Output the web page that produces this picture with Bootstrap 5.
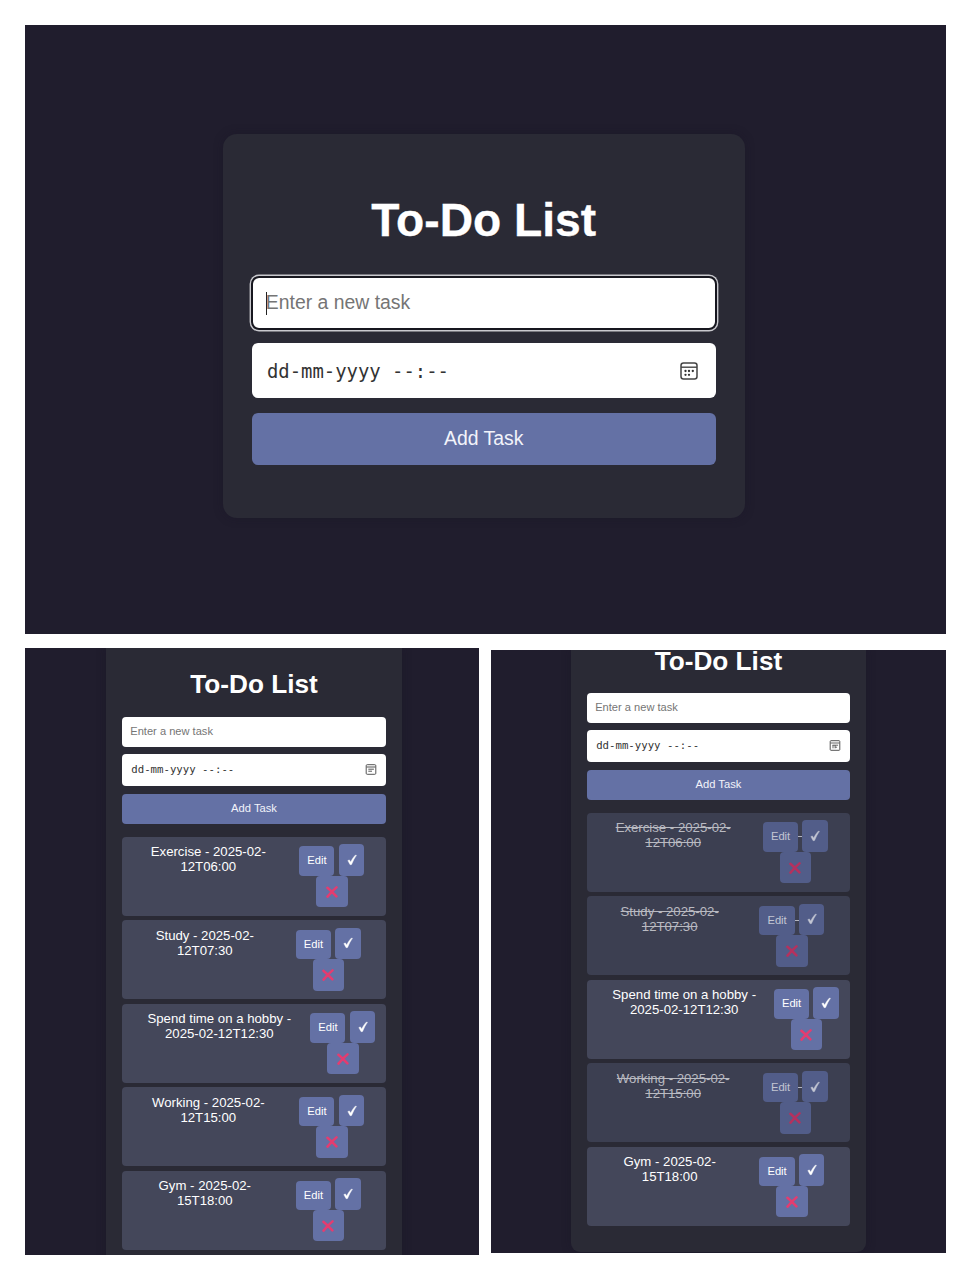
<!DOCTYPE html>
<html lang="en">
<head>
<meta charset="utf-8">
<meta name="viewport" content="width=device-width, initial-scale=1">
<title>To-Do List</title>
<link href="https://cdn.jsdelivr.net/npm/bootstrap@5.3.0/dist/css/bootstrap.min.css" rel="stylesheet">
<style>
body{margin:0;background:#fff;font-family:"Liberation Sans",Arial,sans-serif;width:970px;height:1280px;overflow:hidden}
.board{padding:25px 24.5px 0 25px}
.stage{background:#201d2d;overflow:hidden}
.stage-main{height:609px;padding-top:109px;padding-right:3px}
.stage-left{width:454px;height:607px;margin-top:13.5px}
.stage-right{width:454.5px;height:603.5px;margin-top:15.5px}
.panel{background:#2a2a35;color:#fff;box-shadow:0 0 10px rgba(24,20,36,.35)}
.panel-main{width:521.5px;height:383.5px;border-radius:14px;padding:0 28.5px}
.panel-side{width:296px;padding:0 16.3px;border-radius:0 0 9px 9px}
.stage-left .panel-side{height:700px;margin-left:81px}
.stage-right .panel-side{width:294.5px;height:602px;margin-left:80.2px;padding:0 16px}
.title{font-weight:700;text-align:center;margin:0;white-space:nowrap}
.panel-main .title{font-size:46.2px;line-height:54px;padding-top:59px;margin-bottom:31px;-webkit-text-stroke:.3px #fff}
.panel-side .title{font-size:26.2px;line-height:30px}
.stage-left .title{padding-top:21px;margin-bottom:18px}
.stage-right .title{line-height:22px;margin-bottom:21px}
.field{background:#fff;color:#757575;white-space:nowrap}
.panel-main .field{height:54.5px;border-radius:6px;padding:0 15px;font-size:19.4px}
.panel-main .first{height:50px;margin:0 1px;padding:0 13px 0;outline:2px solid #17171f;box-shadow:0 0 0 3.4px #c9c9ce}
.caret{width:1.3px;height:23px;background:#222;margin-right:-1px}
.panel-main .date{margin-top:15px}
.date{font-family:"DejaVu Sans Mono",monospace;color:#333}
.panel-main .date{font-size:18.9px;padding:2px 14px 0 15.5px}
.add{background:#6471a5;color:#f2f3fa;border:0;width:100%;padding:0}
.add:hover{background:#6471a5}
.panel-main .add{margin-top:15.5px;height:52px;border-radius:6px;font-size:19.4px;padding-bottom:1px}
.panel-side .field{height:30px;border-radius:4px;padding:0 8px 1px;font-size:11.1px}
.panel-side .date{height:31.5px;margin-top:7.5px;font-size:10.7px;padding:0 9px}
.panel-side .add{display:block;height:29.5px;margin-top:8.5px;margin-bottom:13px;border-radius:4px;font-size:11.2px;line-height:27px}
.task{height:79.2px;margin-bottom:4.35px;border-radius:4px;background:#44475a}
.at-a{padding-left:11px}.at-b{padding-left:7.5px}.at-c{padding-left:22px}
.label-text{width:150px;padding-top:7.5px;text-align:center;font-size:13.2px;line-height:15.1px;white-space:nowrap}
.acts{margin:7.6px 0 0 16px;width:65px}
.stage-right .acts{margin-left:14.8px}
.act{background:#6471a5;border-radius:4px;color:#fff;font-size:11.2px;line-height:29px;text-align:center}
.act-edit{width:35.2px;height:29.4px}
.act-ok{width:25.5px;height:31.7px}
.act-del{width:31.5px;height:31.5px}
.task.done{background:#3c3f51;color:#b9bac1}
.done .act{background:#525d89;color:#c3c6d3}
.done .label-text{text-decoration:line-through}
.dash{width:4px;height:1.3px;margin-bottom:14.5px}
.done .dash{background:#b3b5c0}
.act-del svg{color:#e43c70}.done .act-del svg{color:#b5315e}
</style>
</head>
<body>
<svg class="d-none" xmlns="http://www.w3.org/2000/svg">
<symbol id="ok" viewBox="0 0 10 12"><path d="M.8 6.6 2.4 5.9 3.7 8C5 5.2 6.6 2.9 8.2 1.2L9.5 1.3C7.6 4 6 7 4.6 10.5L3.1 10.7Z" fill="currentColor" stroke="currentColor" stroke-width=".4"/></symbol>
<symbol id="del" viewBox="0 0 12 12"><path d="M1.4 1.7Q5.2 4.8 10.4 10.4M10.5 1.4Q6 5.2 1.5 10.6" fill="none" stroke="currentColor" stroke-width="2.5" stroke-linecap="round"/></symbol>
<symbol id="cal" viewBox="0 0 18 18"><rect x="1" y="1" width="16" height="16" rx="2.5" fill="none" stroke="#444" stroke-width="1.5"/><path d="M1 5.2H17" stroke="#444" stroke-width="1.4"/><g fill="#333"><circle cx="5.5" cy="9" r="1.15"/><circle cx="9" cy="9" r="1.15"/><circle cx="12.8" cy="9" r="1.15"/><circle cx="5.5" cy="12.8" r="1.15"/><circle cx="9" cy="12.8" r="1.15"/></g></symbol>
<symbol id="cal-lines" viewBox="0 0 11 11"><rect x=".7" y=".7" width="9.6" height="9.6" rx="1" fill="none" stroke="#555" stroke-width="1"/><path d="M1 3H10M2.8 5.2H8.4M2.8 7.2H6.5" stroke="#555" stroke-width="1"/></symbol>
<symbol id="cal-small" viewBox="0 0 11 11"><rect x=".7" y=".7" width="9.6" height="9.6" rx=".8" fill="none" stroke="#555" stroke-width="1"/><path d="M1 3H10M3 5.2H8.6M3.5 5V8.3M5.6 5V8.3M5.6 7.2H7.6" fill="none" stroke="#555" stroke-width=".9"/></symbol>
</svg>
<main class="board">
<section class="stage stage-main d-flex justify-content-center align-items-start">
<div class="panel panel-main">
<h1 class="title">To-Do List</h1>
<div class="field first d-flex align-items-center"><span class="caret"></span>Enter a new task</div>
<div class="field date d-flex align-items-center justify-content-between"><span>dd-mm-yyyy --:--</span><svg class="me-1" width="18" height="18"><use href="#cal"/></svg></div>
<button class="btn add">Add Task</button>
</div>
</section>
<div class="d-flex justify-content-between align-items-start">
<section class="stage stage-left">
<div class="panel panel-side">
<h2 class="title">To-Do List</h2>
<div class="field d-flex align-items-center">Enter a new task</div>
<div class="field date d-flex align-items-center justify-content-between"><span>dd-mm-yyyy --:--</span><svg width="12" height="11"><use href="#cal-lines"/></svg></div>
<button class="btn add">Add Task</button>
<div class="task d-flex at-a"><div class="label-text">Exercise - 2025-02-<br>12T06:00</div><div class="acts"><div class="d-flex align-items-end justify-content-between"><div class="act act-edit">Edit</div><div class="dash"></div><div class="act act-ok d-flex align-items-center justify-content-center"><svg width="10" height="12"><use href="#ok"/></svg></div></div><div class="act act-del mx-auto d-flex align-items-center justify-content-center"><svg width="12" height="12"><use href="#del"/></svg></div></div></div>
<div class="task d-flex at-b"><div class="label-text">Study - 2025-02-<br>12T07:30</div><div class="acts"><div class="d-flex align-items-end justify-content-between"><div class="act act-edit">Edit</div><div class="dash"></div><div class="act act-ok d-flex align-items-center justify-content-center"><svg width="10" height="12"><use href="#ok"/></svg></div></div><div class="act act-del mx-auto d-flex align-items-center justify-content-center"><svg width="12" height="12"><use href="#del"/></svg></div></div></div>
<div class="task d-flex at-c"><div class="label-text">Spend time on a hobby -<br>2025-02-12T12:30</div><div class="acts"><div class="d-flex align-items-end justify-content-between"><div class="act act-edit">Edit</div><div class="dash"></div><div class="act act-ok d-flex align-items-center justify-content-center"><svg width="10" height="12"><use href="#ok"/></svg></div></div><div class="act act-del mx-auto d-flex align-items-center justify-content-center"><svg width="12" height="12"><use href="#del"/></svg></div></div></div>
<div class="task d-flex at-a"><div class="label-text">Working - 2025-02-<br>12T15:00</div><div class="acts"><div class="d-flex align-items-end justify-content-between"><div class="act act-edit">Edit</div><div class="dash"></div><div class="act act-ok d-flex align-items-center justify-content-center"><svg width="10" height="12"><use href="#ok"/></svg></div></div><div class="act act-del mx-auto d-flex align-items-center justify-content-center"><svg width="12" height="12"><use href="#del"/></svg></div></div></div>
<div class="task d-flex at-b"><div class="label-text">Gym - 2025-02-<br>15T18:00</div><div class="acts"><div class="d-flex align-items-end justify-content-between"><div class="act act-edit">Edit</div><div class="dash"></div><div class="act act-ok d-flex align-items-center justify-content-center"><svg width="10" height="12"><use href="#ok"/></svg></div></div><div class="act act-del mx-auto d-flex align-items-center justify-content-center"><svg width="12" height="12"><use href="#del"/></svg></div></div></div>
</div>
</section>
<section class="stage stage-right">
<div class="panel panel-side">
<h2 class="title">To-Do List</h2>
<div class="field d-flex align-items-center">Enter a new task</div>
<div class="field date d-flex align-items-center justify-content-between"><span>dd-mm-yyyy --:--</span><svg width="12" height="11"><use href="#cal-small"/></svg></div>
<button class="btn add">Add Task</button>
<div class="task done d-flex at-a"><div class="label-text">Exercise - 2025-02-<br>12T06:00</div><div class="acts"><div class="d-flex align-items-end justify-content-between"><div class="act act-edit">Edit</div><div class="dash"></div><div class="act act-ok d-flex align-items-center justify-content-center"><svg width="10" height="12"><use href="#ok"/></svg></div></div><div class="act act-del mx-auto d-flex align-items-center justify-content-center"><svg width="12" height="12"><use href="#del"/></svg></div></div></div>
<div class="task done d-flex at-b"><div class="label-text">Study - 2025-02-<br>12T07:30</div><div class="acts"><div class="d-flex align-items-end justify-content-between"><div class="act act-edit">Edit</div><div class="dash"></div><div class="act act-ok d-flex align-items-center justify-content-center"><svg width="10" height="12"><use href="#ok"/></svg></div></div><div class="act act-del mx-auto d-flex align-items-center justify-content-center"><svg width="12" height="12"><use href="#del"/></svg></div></div></div>
<div class="task d-flex at-c"><div class="label-text">Spend time on a hobby -<br>2025-02-12T12:30</div><div class="acts"><div class="d-flex align-items-end justify-content-between"><div class="act act-edit">Edit</div><div class="dash"></div><div class="act act-ok d-flex align-items-center justify-content-center"><svg width="10" height="12"><use href="#ok"/></svg></div></div><div class="act act-del mx-auto d-flex align-items-center justify-content-center"><svg width="12" height="12"><use href="#del"/></svg></div></div></div>
<div class="task done d-flex at-a"><div class="label-text">Working - 2025-02-<br>12T15:00</div><div class="acts"><div class="d-flex align-items-end justify-content-between"><div class="act act-edit">Edit</div><div class="dash"></div><div class="act act-ok d-flex align-items-center justify-content-center"><svg width="10" height="12"><use href="#ok"/></svg></div></div><div class="act act-del mx-auto d-flex align-items-center justify-content-center"><svg width="12" height="12"><use href="#del"/></svg></div></div></div>
<div class="task d-flex at-b"><div class="label-text">Gym - 2025-02-<br>15T18:00</div><div class="acts"><div class="d-flex align-items-end justify-content-between"><div class="act act-edit">Edit</div><div class="dash"></div><div class="act act-ok d-flex align-items-center justify-content-center"><svg width="10" height="12"><use href="#ok"/></svg></div></div><div class="act act-del mx-auto d-flex align-items-center justify-content-center"><svg width="12" height="12"><use href="#del"/></svg></div></div></div>
</div>
</section>
</div>
</main>
</body>
</html>
